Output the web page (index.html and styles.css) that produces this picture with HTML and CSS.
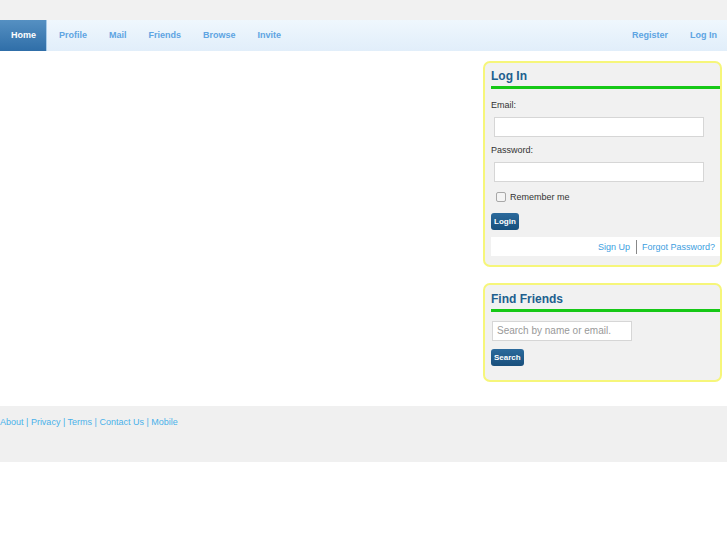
FILE: index.html
```html
<!DOCTYPE html>
<html>
<head>
<meta charset="utf-8">
<title>Home</title>
<link rel="stylesheet" href="styles.css">
</head>
<body>
<div class="topband"></div>
<nav class="nav">
  <ul class="nav-left">
    <li><a class="active" href="#">Home</a></li>
    <li><a href="#">Profile</a></li>
    <li><a href="#">Mail</a></li>
    <li><a href="#">Friends</a></li>
    <li><a href="#">Browse</a></li>
    <li><a href="#">Invite</a></li>
  </ul>
  <ul class="nav-right">
    <li><a href="#">Register</a></li>
    <li><a href="#">Log In</a></li>
  </ul>
</nav>
<main class="main">
  <div class="content"></div>
  <aside class="sidebar">
    <section class="box box-login">
      <h2 class="box-title">Log In</h2>
      <form class="login-form">
        <label class="field-label">Email:</label>
        <input class="text-input" type="text">
        <label class="field-label pw">Password:</label>
        <input class="text-input" type="password">
        <div class="remember"><span class="checkbox"></span><span>Remember me</span></div>
        <button class="btn" type="button">Login</button>
      </form>
      <div class="box-links">
        <a href="#">Sign Up</a><span class="sep"></span><a href="#">Forgot Password?</a>
      </div>
    </section>
    <section class="box box-find">
      <h2 class="box-title">Find Friends</h2>
      <div class="search-input">Search by name or email.</div>
      <button class="btn btn-search" type="button">Search</button>
    </section>
  </aside>
</main>
<footer class="footer">
  <a href="#">About</a> | <a href="#">Privacy</a> | <a href="#">Terms</a> | <a href="#">Contact Us</a> | <a href="#">Mobile</a>
</footer>
</body>
</html>
```

FILE: styles.css
```css
* { box-sizing: border-box; }
html, body { margin: 0; padding: 0; background: #ffffff; }
body { font-family: "Liberation Sans", Arial, sans-serif; font-size: 9px; color: #333; }
a { text-decoration: none; }

.topband { height: 20px; background: #f1f1f1; }

.nav {
  height: 31px;
  display: flex;
  justify-content: space-between;
  background: linear-gradient(#eff7fd, #e1eefa);
}
.nav ul { list-style: none; margin: 0; padding: 0; display: flex; }
.nav a {
  display: block;
  height: 31px;
  line-height: 31px;
  padding: 0 10px 0 12px;
  font-weight: bold;
  font-size: 9px;
  color: #5ea4e2;
}
.nav-left a.active {
  width: 47px;
  padding: 0 0 0 11px;
  color: #ffffff;
  background: linear-gradient(#5590c2, #2f6ea8);
  border-right: 1px solid #a8cbe8;
}
.nav-right a { padding: 0 10px 0 12px; }

.main {
  display: flex;
  padding: 10px 5px 24px 0;
}
.content { flex: 1; }
.sidebar { width: 239px; display: flex; flex-direction: column; gap: 16px; }

.box {
  border: 2px solid #f6f67a;
  border-radius: 7px;
  background: #f1f1f1;
  padding: 5px 0 11px 6px;
}
.box-login { padding-bottom: 9px; }
.box-title {
  margin: 0;
  font-size: 12px;
  font-weight: bold;
  line-height: 16px;
  color: #215f8e;
  padding-bottom: 2px;
  border-bottom: 3px solid #16c816;
}
.box-find .box-title { padding-top: 1px; padding-bottom: 2px; }
.login-form { display: flex; flex-direction: column; align-items: flex-start; padding-top: 10px; }
.field-label { line-height: 12px; color: #333; }
.field-label.pw { margin-top: 7px; }
.text-input {
  margin: 6px 0 0 3px;
  width: 210px;
  height: 20px;
  border: 1px solid #d6d6d6;
  background: #fff;
  padding: 0;
}
.remember {
  display: flex;
  align-items: center;
  margin: 10px 0 0 5px;
  height: 10px;
  gap: 4px;
}
.checkbox {
  width: 10px;
  height: 10px;
  border: 1px solid #a8a8a8;
  border-radius: 2px;
  background: #f4f4f4;
}
.btn {
  margin-top: 11px;
  height: 17px;
  padding: 0 3px;
  border: 0;
  border-radius: 3px;
  background: linear-gradient(#2b6a9c, #184f7c);
  color: #fff;
  font-family: "Liberation Sans", Arial, sans-serif;
  font-size: 8px;
  font-weight: bold;
  line-height: 17px;
}
.box-links {
  margin-top: 7px;
  height: 19px;
  background: #ffffff;
  display: flex;
  justify-content: flex-end;
  align-items: center;
  padding-right: 5px;
}
.box-links a { color: #3d9ee0; font-size: 9px; }
.sep { width: 1px; height: 14px; background: #888; margin: 0 5px 0 6px; }

.box-find { padding-bottom: 14px; }
.search-input {
  margin: 9px 0 0 1px;
  width: 140px;
  height: 20px;
  border: 1px solid #d6d6d6;
  background: #fff;
  color: #999;
  font-size: 10px;
  line-height: 18px;
  padding-left: 4px;
}
.btn-search { margin-top: 8px; padding: 0 3px; }

.footer {
  height: 56px;
  background: #f0f0f0;
  padding-top: 10px;
  line-height: 12px;
  color: #4ab0ea;
}
.footer a { color: #4ab0ea; }
```
